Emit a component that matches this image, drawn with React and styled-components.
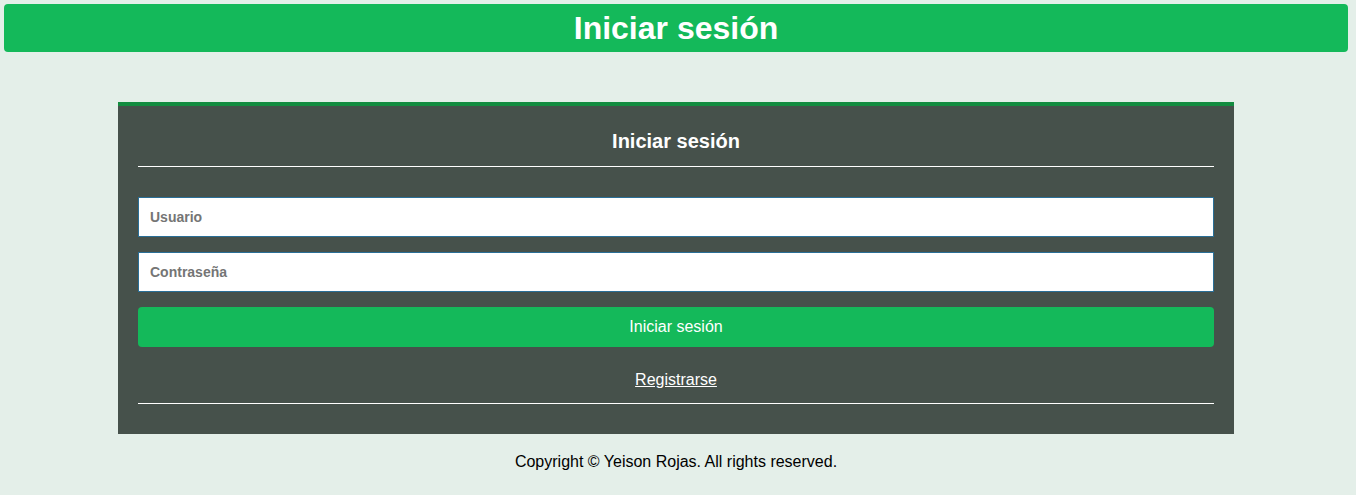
import React from "react";
import styled, { createGlobalStyle } from "styled-components";

const GlobalStyle = createGlobalStyle`
  body {
    margin: 0;
    background: #e4efe9;
    font-family: "Liberation Sans", Arial, sans-serif;
  }
`;

const Page = styled.div`
  padding: 4px 8px 20px 4px;
`;

const Header = styled.header`
  background: #14b95a;
  border-radius: 4px;
  height: 48px;
  display: flex;
  align-items: center;
  justify-content: center;
`;

const HeaderTitle = styled.h1`
  margin: 0;
  color: #fff;
  font-size: 32px;
  font-weight: bold;
`;

const Card = styled.div`
  width: 1116px;
  margin: 50px auto 0;
  box-sizing: border-box;
  background: #46514b;
  border-top: 4px solid #138c40;
  padding: 20px 20px 30px;
`;

const CardTitle = styled.h2`
  margin: 0;
  color: #fff;
  font-size: 20px;
  font-weight: bold;
  text-align: center;
  line-height: 30px;
`;

const Rule = styled.hr`
  border: 0;
  border-top: 1px solid #fff;
  margin: ${(p) => p.$top}px 0 0;
`;

const Form = styled.form`
  display: flex;
  flex-direction: column;
  gap: 15px;
  margin-top: 30px;
`;

const Input = styled.input`
  height: 40px;
  box-sizing: border-box;
  border: 1px solid #2a6f97;
  padding: 0 11px;
  font-family: inherit;
  font-size: 14px;
  font-weight: bold;
  color: #333;
  outline: none;
  &::placeholder {
    color: #757575;
  }
`;

const Button = styled.button`
  height: 40px;
  border: 0;
  border-radius: 4px;
  background: #14b95a;
  color: #fff;
  font-family: inherit;
  font-size: 16px;
  cursor: pointer;
`;

const LinkRow = styled.div`
  text-align: center;
  margin-top: 24px;
  line-height: 18px;
`;

const Link = styled.a`
  color: #fff;
  font-size: 16px;
  text-decoration: underline;
`;

const Footer = styled.footer`
  text-align: center;
  margin-top: 19px;
  font-size: 16px;
  line-height: 18px;
  color: #000;
`;

const App = () => {
  return (
    <Page>
      <GlobalStyle />
      <Header>
        <HeaderTitle>Iniciar sesión</HeaderTitle>
      </Header>
      <Card>
        <CardTitle>Iniciar sesión</CardTitle>
        <Rule $top={10} />
        <Form onSubmit={(e) => e.preventDefault()}>
          <Input type="text" placeholder="Usuario" />
          <Input type="password" placeholder="Contraseña" />
          <Button type="submit">Iniciar sesión</Button>
        </Form>
        <LinkRow>
          <Link href="#">Registrarse</Link>
        </LinkRow>
        <Rule $top={14} />
      </Card>
      <Footer>Copyright © Yeison Rojas. All rights reserved.</Footer>
    </Page>
  );
};

export default App;
